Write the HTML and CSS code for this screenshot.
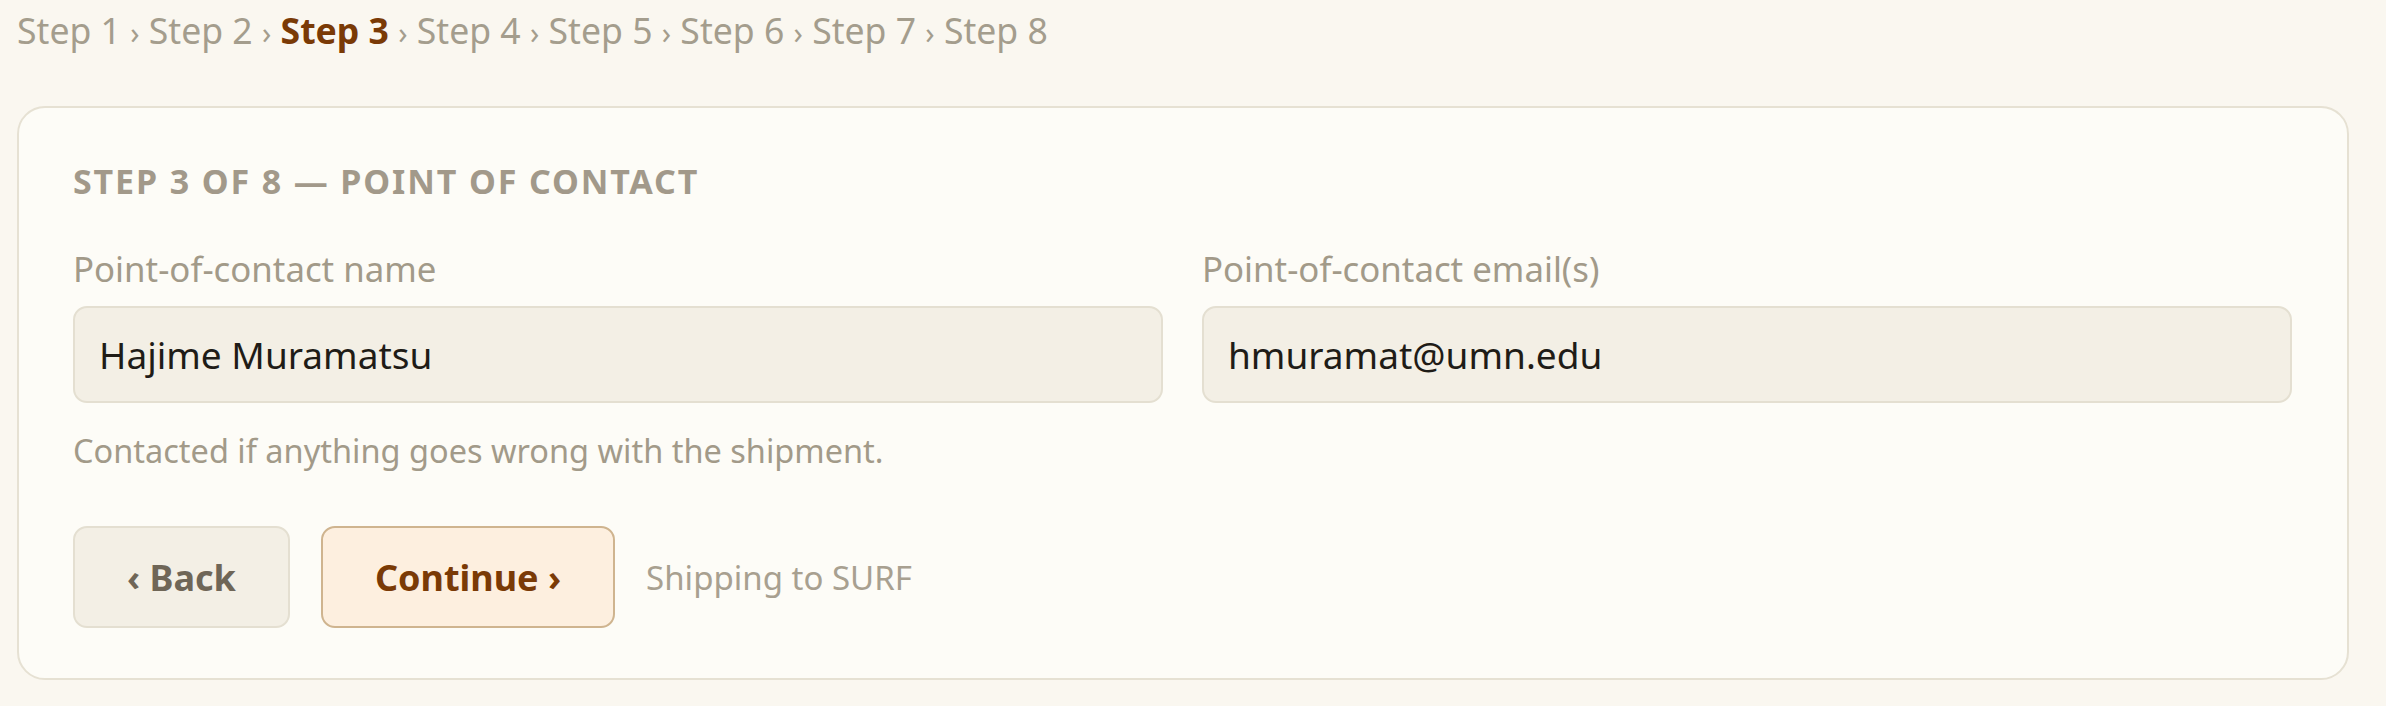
FILE: index.html
```html
<!DOCTYPE html>
<html lang="en">
<head>
<meta charset="utf-8">
<title>Step 3 of 8 — Point of contact</title>
<link rel="stylesheet" href="styles.css">
</head>
<body>
<nav class="crumbs">
  <span class="crumb">Step 1</span> <span class="sep">›</span>
  <span class="crumb">Step 2</span> <span class="sep">›</span>
  <span class="crumb active">Step 3</span> <span class="sep">›</span>
  <span class="crumb">Step 4</span> <span class="sep">›</span>
  <span class="crumb">Step 5</span> <span class="sep">›</span>
  <span class="crumb">Step 6</span> <span class="sep">›</span>
  <span class="crumb">Step 7</span> <span class="sep">›</span>
  <span class="crumb">Step 8</span>
</nav>
<section class="card">
  <h2 class="card-title">Step 3 of 8 — Point of contact</h2>
  <div class="fields">
    <label class="field">
      <span class="label">Point-of-contact name</span>
      <input class="input" type="text" value="Hajime Muramatsu">
    </label>
    <label class="field">
      <span class="label">Point-of-contact email(s)</span>
      <input class="input" type="text" value="hmuramat@umn.edu">
    </label>
  </div>
  <p class="help">Contacted if anything goes wrong with the shipment.</p>
  <div class="actions">
    <button class="btn btn-back" type="button">‹ Back</button>
    <button class="btn btn-continue" type="button">Continue ›</button>
    <span class="note">Shipping to SURF</span>
  </div>
</section>
</body>
</html>
```
FILE: styles.css
```css
* { box-sizing: border-box; }

body {
  margin: 0;
  padding: 5px 37px 0 17px;
  background: #faf7f0;
  font-family: "Noto Sans", "Inter", "Liberation Sans", sans-serif;
  color: #1f1c17;
}

.crumbs {
  height: 50px;
  font-size: 35.6px;
  line-height: 50px;
  color: #a49d8d;
  white-space: nowrap;
}

.crumb.active {
  color: #7a3a06;
  font-weight: 700;
}

.sep {
  font-size: 30px;
}

.card {
  margin-top: 51px;
  background: #fdfcf7;
  border: 2px solid #e6e1d3;
  border-radius: 28px;
  padding: 52px 55px 50px 54px;
}

.card-title {
  margin: 0;
  font-size: 34px;
  line-height: 42px;
  font-weight: 700;
  letter-spacing: 0.055em;
  text-transform: uppercase;
  color: #a2998a;
}

.fields {
  margin-top: 46px;
  display: grid;
  grid-template-columns: 1fr 1fr;
  column-gap: 39px;
}

.field {
  display: flex;
  flex-direction: column;
  gap: 16px;
}

.label {
  font-size: 34.8px;
  line-height: 42px;
  color: #a29a89;
}

.input {
  height: 97px;
  width: 100%;
  margin: 0;
  padding: 0 24px;
  border: 2px solid #e4dfd1;
  border-radius: 14px;
  background: #f3efe5;
  font-family: inherit;
  font-size: 37px;
  color: #1f1c17;
  outline: none;
}

.help {
  margin: 27px 0 0;
  font-size: 32.5px;
  line-height: 42px;
  color: #a29a89;
}

.actions {
  margin-top: 54px;
  display: flex;
  align-items: center;
  gap: 31px;
}

.btn {
  height: 102px;
  padding: 0 52px;
  border-radius: 14px;
  font-family: inherit;
  font-size: 36px;
  font-weight: 700;
  cursor: pointer;
}

.btn-back {
  background: #f3efe5;
  border: 2.5px solid #e4dfd1;
  color: #6f6657;
}

.btn-continue {
  background: #fdefdf;
  border: 2.5px solid #cfb48f;
  color: #7a3a06;
}

.note {
  font-size: 33px;
  color: #a8a090;
}
```
